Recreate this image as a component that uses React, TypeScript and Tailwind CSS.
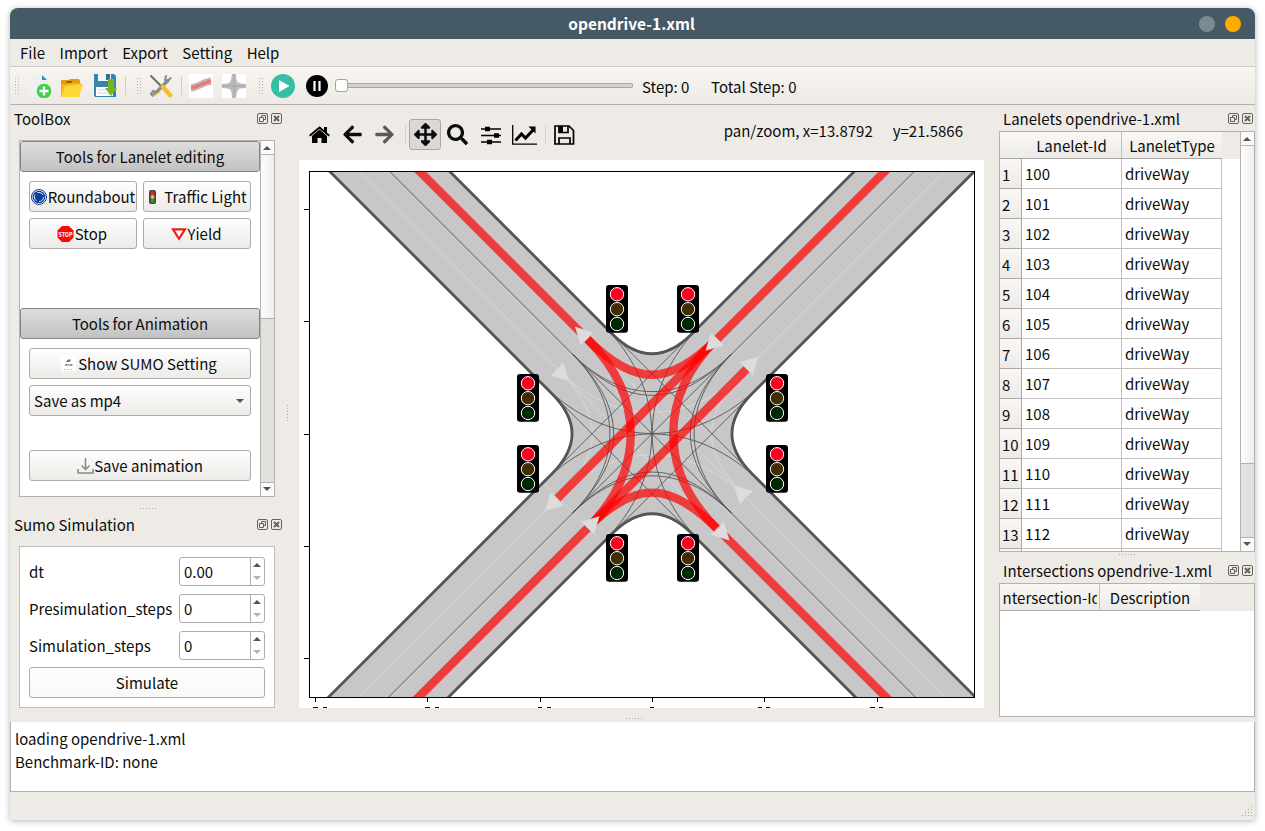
import React from "react";
import { FaArrowLeft, FaArrowRight, FaArrowsAlt, FaSearch } from "react-icons/fa";

const CX = 652;
const CY = 433.7;

type Pt = [number, number];

function turn(a: Pt, v: Pt, b: Pt, k: number): string {
  const c1 = [a[0] + (v[0] - a[0]) * k, a[1] + (v[1] - a[1]) * k];
  const c2 = [b[0] + (v[0] - b[0]) * k, b[1] + (v[1] - b[1]) * k];
  return `M${a[0]} ${a[1]}C${c1[0]} ${c1[1]} ${c2[0]} ${c2[1]} ${b[0]} ${b[1]}`;
}

/* Curve that joins two arms on one side; q is the quarter turn from "top". */
function side(q: number, along: number, shift: number, k: number): string {
  const rot = ([x, y]: Pt): Pt => {
    const r: Pt[] = [[x, y], [-y, x], [-x, -y], [y, -x]];
    return [CX + r[q][0], CY + r[q][1]];
  };
  return turn(
    rot([-along - shift, -along + shift]),
    rot([0, 2 * shift]),
    rot([along + shift, -along + shift]),
    k
  );
}

const B = 79.5;
const arrows: { at: Pt; dir: Pt }[] = [
  { at: [587, 338.8], dir: [-1, -1] },
  { at: [717.5, 338.8], dir: [-1, 1] },
  { at: [746.5, 368.5], dir: [1, -1] },
  { at: [557, 369], dir: [1, 1] },
  { at: [587.5, 528.2], dir: [1, -1] },
  { at: [557, 499], dir: [-1, 1] },
  { at: [717.5, 528.4], dir: [1, 1] },
  { at: [746, 497.5], dir: [-1, -1] },
];
const lights: Pt[] = [
  [606, 285], [677, 285], [517, 374], [766, 374],
  [517, 445], [766, 445], [606, 534], [677, 534],
];

function edge(q: number): string {
  const rot = (x: number, y: number) => {
    const r: Pt[] = [[x, y], [-y, x], [-x, -y], [y, -x]];
    return `${CX + r[q][0]} ${CY + r[q][1]}`;
  };
  return `M${rot(-380, -440)}L${rot(-40, -100)}Q${rot(0, -60)} ${rot(40, -100)}L${rot(380, -440)}`;
}

function RoadPlot() {
  const line = (x1: number, y1: number, x2: number, y2: number) => `M${CX + x1} ${CY + y1}L${CX + x2} ${CY + y2}`;
  return (
    <svg className="block bg-white" width="685" height="548" viewBox="299 160 685 548">
      <defs>
        <clipPath id="axes"><rect x="310" y="171" width="665" height="526" /></clipPath>
      </defs>
      <g clipPath="url(#axes)">
        <path
          fill="#c7c7c7"
          d="M272 -6.3L612 333.7Q652 373.7 692 333.7L1032 -6.3L1112 33.7L752 393.7Q712 433.7 752 473.7L1112 833.7L1032 873.7L692 533.7Q652 493.7 612 533.7L272 873.7L192 833.7L552 473.7Q592 433.7 552 393.7L192 33.7Z"
        />
        <g fill="none" stroke="#d9d9d9" strokeWidth="1">
          <path d={line(-410, -380, -94.5, -64.5)} />
          <path d={line(410, -380, 94.5, -64.5)} />
          <path d={line(-410, 380, -94.5, 64.5)} />
          <path d={line(410, 380, 94.5, 64.5)} />
          <path d={line(-94.5, -64.5, 64.5, 94.5)} />
          <path d={line(94.5, 64.5, -64.5, -94.5)} />
          <path d={side(3, 79.5, -15, 0.72)} />
          <path d={side(1, 79.5, -15, 0.72)} />
          <path d={side(0, 79.5, 15, 0.61)} />
          <path d={side(2, 79.5, 15, 0.61)} />
          <path d={line(-109, 49, -49, 109)} strokeOpacity=".6" />
          <path d={line(109, 49, 49, 109)} strokeOpacity=".6" />
        </g>
        <g fill="none" stroke="#555" strokeWidth="0.9">
          <path d="M262 43.7L1042 823.7M1042 43.7L262 823.7" />
          <path d={line(-49.5, -109.5, 109.5, 49.5)} />
          <path d={line(-109.5, -49.5, 49.5, 109.5)} />
          <path d={line(49.5, -109.5, -109.5, 49.5)} />
          <path d={line(109.5, -49.5, -49.5, 109.5)} />
          {[0, 1, 2, 3].map((q) => (
            <g key={q}>
              <path d={side(q, B, 0, 0.627)} />
              <path d={side(q, B, 0, 0.69)} />
              <path d={side(q, B, 30, 0.6)} />
            </g>
          ))}
        </g>
        <g fill="none" stroke="#555" strokeWidth="2.8">
          {[0, 1, 2, 3].map((q) => <path key={q} d={edge(q)} />)}
        </g>
        <g fill="none" stroke="#ff0000" strokeOpacity="0.7" strokeWidth="8.4">
          <path d="M387 138.7L587 338.7" />
          <path d="M917.5 138.7L717 339.2" />
          <path d="M387 728.7L587.5 528.2" />
          <path d="M917.5 728.7L717 528.2" />
          <path d={side(0, B, -15, 0.735)} />
          <path d={side(2, B, -15, 0.735)} />
          <path d={side(3, B, 15, 0.61)} />
          <path d={side(1, B, 15, 0.61)} />
          <path d="M716.5 339.2L557.5 498.2" />
          <path d="M587.5 528.2L746.5 369.2" />
        </g>
        {arrows.map(({ at, dir }, i) => (
          <path
            key={i}
            fill="#dcdcdc"
            d={`M${at[0] + dir[0] * 12} ${at[1] + dir[1] * 12}L${at[0] - dir[1] * 6.4} ${at[1] + dir[0] * 6.4}L${at[0] + dir[1] * 6.4} ${at[1] - dir[0] * 6.4}Z`}
          />
        ))}
        {lights.map(([x, y], i) => (
          <g key={i} stroke="#fff" strokeWidth="1">
            <rect x={x} y={y} width="22" height="47.7" rx="3" fill="#000" stroke="none" />
            <circle cx={x + 11} cy={y + 9.3} r="6.7" fill="#ff0022" />
            <circle cx={x + 11} cy={y + 24.2} r="6.7" fill="#402d00" />
            <circle cx={x + 11} cy={y + 39} r="6.7" fill="#002800" />
          </g>
        ))}
      </g>
      <rect x="309.5" y="171.5" width="665" height="526" fill="none" stroke="#000" />
      <path
        stroke="#000"
        d="M304 209.5h5M304 321.5h5M304 434.5h5M304 546.5h5M304 658.5h5M315.5 698v4M427.5 698v4M540.5 698v4M652.5 698v4M764.5 698v4M877.5 698v4"
      />
      <path
        stroke="#000"
        d="M313 707.5h5M323 707.5h4M425 707.5h5M435 707.5h4M538 707.5h4M547 707.5h4M650 707.5h4M758 707.5h4M766 707.5h4M870 707.5h5M879 707.5h4"
      />
    </svg>
  );
}

function DockTitle({ children, className }: { children: React.ReactNode; className: string }) {
  return (
    <div className={`flex items-center justify-between ${className}`}>
      <span className="whitespace-nowrap pt-px">{children}</span>
      <div className="flex gap-[3px]">
        <svg width="11" height="11" fill="none" stroke="#66635f">
          <rect x=".5" y=".5" width="10" height="10" rx="1.5" />
          <path d="M4.5 4V2.5h4v4H7M2.5 4.5h4v4h-4z" />
        </svg>
        <svg width="11" height="11" fill="none" stroke="#66635f">
          <rect x=".5" y=".5" width="10" height="10" rx="1.5" />
          <path d="M3 3l5 5M8 3L3 8" strokeWidth="2" />
        </svg>
      </div>
    </div>
  );
}

function Tri({ down, color = "#555" }: { down?: boolean; color?: string }) {
  return (
    <svg width="8" height="4" fill={color} className="block shrink-0">
      <path d={down ? "M0 0h8L4 4z" : "M0 4h8L4 0z"} />
    </svg>
  );
}

function ScrollBar({ thumb }: { thumb: string }) {
  return (
    <div className="flex w-[14px] shrink-0 flex-col border-l border-[#b4b1ae] bg-[#e1e1de]">
      <div className="flex h-[14px] items-center justify-center border-b border-[#b4b1ae] bg-[#fbfbfa] pr-px"><Tri /></div>
      <div className={`border-b border-[#b4b1ae] bg-gradient-to-r from-[#fdfdfd] to-[#efeeec] ${thumb}`} />
      <div className="grow" />
      <div className="flex h-[14px] items-center justify-center border-t border-[#b4b1ae] bg-[#fbfbfa] pb-px pr-px"><Tri down /></div>
    </div>
  );
}

function Button({ children, className = "" }: { children: React.ReactNode; className?: string }) {
  return (
    <div className={`flex h-[31px] items-center justify-center whitespace-nowrap rounded-[3px] border border-[#aeaba8] bg-gradient-to-b from-[#fefefe] to-[#edebe8] ${className}`}>
      {children}
    </div>
  );
}

function ToolHeader({ children }: { children: React.ReactNode }) {
  return (
    <div className="flex h-[31px] items-center justify-center rounded-[3px] border border-[#868686] bg-gradient-to-b from-[#dedede] to-[#c2c2c2]">
      {children}
    </div>
  );
}

function Grip() {
  return (
    <svg width="5" height="16" fill="#b9b6b2">
      {[0, 3, 6, 9, 12, 15].map((y) => (
        <g key={y}><rect x="0" y={y} width="1" height="1" /><rect x="3" y={y} width="1" height="1" /></g>
      ))}
    </svg>
  );
}

function Dots({ vertical }: { vertical?: boolean }) {
  return (
    <svg width={vertical ? 1 : 16} height={vertical ? 16 : 1} fill="#b0ada9" className="block">
      {[0, 3, 6, 9, 12, 15].map((p) => <rect key={p} x={vertical ? 0 : p} y={vertical ? p : 0} width="1" height="1" />)}
    </svg>
  );
}

function SpinRow({ label, value }: { label: string; value: string }) {
  return (
    <div className="flex h-[29px] items-center justify-between">
      <span>{label}</span>
      <div className="flex h-[29px] w-[86px] rounded-[3px] border border-[#b0adaa] bg-white">
        <span className="flex w-[71px] items-center border-r border-[#b0adaa] pl-1">{value}</span>
        <div className="flex grow flex-col items-center justify-between pb-[5px] pr-px pt-[5px]">
          <Tri /><Tri down color="#b5b2af" />
        </div>
      </div>
    </div>
  );
}

function MainToolbar() {
  return (
    <div className="flex h-[38px] items-center border-b border-[#b4b1ae] bg-gradient-to-b from-[#f8f5f1] to-[#edeae5] pl-[5px]">
      <Grip />
      <svg className="ml-2" width="24" height="24">
        <path d="M2 1h12l6 6v16H2z" fill="#eef1f2" /><path d="M14 1l5 5h-5z" fill="#2a93b8" />
        <circle cx="16" cy="17" r="7.3" fill="#43cf46" /><path d="M16 12.5v9M11.5 17h9" stroke="#fff" strokeWidth="2.4" />
      </svg>
      <svg className="ml-2" width="24" height="24">
        <path d="M1 6h8l1-1h9l1 2v5H1z" fill="#e39b0a" /><path d="M7 7h5v2H6z" fill="#8d5b0c" />
        <path d="M1 22V10h6l2-1h12v3l-3 11H2z" fill="#f0b416" /><path d="M5 12l8-1 10-1-4 13H1z" fill="#fdd835" />
      </svg>
      <svg className="ml-[10px]" width="24" height="24">
        <path d="M0 0h20l2 2v21H1l-1-2z" fill="#3585ac" /><path d="M4 0h13v7H4z" fill="#f2f5f8" /><path d="M12 0h4v6h-4z" fill="#31718f" />
        <path d="M2 13h17v9H2z" fill="#fff" /><path d="M4 16h11M4 19h11" stroke="#cbd3de" />
        <path d="M14 5h6v9h3l-6 8-6-8h3z" fill="#78b51c" />
      </svg>
      <div className="ml-[7px] h-[19px] w-px bg-[#cfccc7]" />
      <div className="ml-[11px] flex"><Grip /></div>
      <svg className="ml-[7px]" width="24" height="24" fill="none" strokeLinecap="round">
        <path d="M2 2l12 12" stroke="#666" strokeWidth="1.8" /><path d="M5.500 20L19 6.500" stroke="#858b93" strokeWidth="3.2" />
        <path d="M14 13l7 8" stroke="#f7bd25" strokeWidth="4.5" />
        <path d="M21.5 4l-2.500 3-3-1 1-4M7 18l-3-1-2 3 2 2" stroke="#858b93" strokeWidth="2" />
        <path d="M10.5 18l-6 4" stroke="#f7bd25" strokeWidth="1.5" />
      </svg>
      <div className="ml-2 h-[19px] w-px bg-[#cfccc7]" />
      <svg className="ml-[7px] bg-white" width="24" height="24" fill="none">
        <path d="M2 14c8-1 10-5 20-7" stroke="#d2cfcf" strokeWidth="7" /><path d="M2 14c8-1 10-5 20-7" stroke="#e87878" strokeWidth="3.5" />
        <path d="M2 11c8-1 10-5 20-7M2 17c8-1 10-5 20-7" stroke="#999595" strokeWidth=".6" />
      </svg>
      <svg className="ml-[9px] bg-white" width="24" height="24">
        <path d="M10 0h4q0 8 3 9t7 1v4q-5 0-7 1t-3 9h-4q0-8-3-9t-7-1v-4q5 0 7-1t3-9z" fill="#bdbdbd" />
        <path d="M12 0v24M0 12h24" stroke="#a5a5a5" />
      </svg>
      <div className="ml-[13px] flex"><Grip /></div>
      <svg className="ml-[7px]" width="24" height="24"><circle cx="12" cy="12" r="12" fill="#35bfa6" /><path d="M8 6l10.5 6L8 18z" fill="#fff" /></svg>
      <svg className="ml-[11px]" width="22" height="22"><circle cx="11" cy="11" r="11" /><path d="M8.5 6v10M13.5 6v10" stroke="#fff" strokeWidth="2.2" /></svg>
      <div className="ml-[7px] flex items-center">
        <div className="h-[13px] w-[13px] rounded-[3px] border border-[#a5a2a0] bg-white" />
        <div className="h-[5px] w-[285px] rounded-r-[2px] border border-l-0 border-[#aaa7a4] bg-[#d6d3cf]" />
      </div>
      <span className="ml-[9px] w-[69px] pt-[3px]">Step: 0</span>
      <span className="pt-[3px]">Total Step: 0</span>
    </div>
  );
}

function PlotToolbar() {
  return (
    <div className="flex h-[55px] items-center pl-[10px] pt-[4px]">
      <svg width="21" height="18"><path d="M10.5 3.500L3 10v7h5.500v-5h4v5H18v-7z" /><path d="M.7 9.700l9.800-8.200 9.800 8.200" fill="none" stroke="#000" strokeWidth="1.9" /><path d="M15 1h3v6l-3-2.500z" /></svg>
      <FaArrowLeft className="ml-[12px]" size={21} />
      <FaArrowRight className="ml-[11px]" size={21} color="#5c5a57" />
      <div className="ml-[10px] h-[19px] w-px bg-[#d8d5d0]" />
      <div className="ml-[3px] flex h-[31px] w-[32px] items-center justify-center rounded-[3px] border border-[#a9a6a3] bg-[#dbd8d5]"><FaArrowsAlt size={23} /></div>
      <FaSearch className="ml-[6px]" size={21} />
      <svg className="ml-[13px]" width="20" height="20" stroke="#000" strokeWidth="1.4"><path d="M0 4h20M0 10.5h20M0 17h20" /><path d="M4 4h5M13 10.5h5M6 17h5" strokeWidth="4.5" /></svg>
      <svg className="ml-[11px]" width="25" height="20" fill="none" stroke="#000"><path d="M.7 0v19.200H25" strokeWidth="1.3" /><path d="M3.5 15.500l6-6.500 4 4 8-8.500" strokeWidth="3" /><path d="M16.5 1.500h7v7z" fill="#000" stroke="none" /></svg>
      <div className="ml-[8px] h-[19px] w-px bg-[#d8d5d0]" />
      <svg className="ml-[8px]" width="21" height="20" fill="none" stroke="#000" strokeWidth="1.7"><path d="M1 1h14l4.500 4.500V19H1z" /><path d="M5 19v-6h11v6" /><path d="M5 1v6.500h9V1" /><path d="M5 1h4v6H5z" fill="#000" stroke="none" /></svg>
      <span className="mb-[8px] ml-auto mr-[21px] flex gap-5 whitespace-nowrap"><span>pan/zoom, x=13.8792</span><span>y=21.5866</span></span>
    </div>
  );
}

const headCell = "flex items-center justify-center overflow-hidden whitespace-nowrap border-b border-r border-[#c2bfbc] border-b-[#aaa7a4] bg-gradient-to-b from-[#faf7f4] to-[#edebe8] pt-[2px]";

export default function App() {
  return (
    <div className="h-[831px] w-[1265px] overflow-hidden bg-white pl-[10px] pt-2 font-['Noto_Sans_CJK_SC',sans-serif] text-[15px] leading-5 text-[#0c0c0c]">
      <div className="flex h-[812px] w-[1245px] flex-col overflow-hidden rounded-b-[2px] rounded-t-[8px] bg-[#eeebe6] shadow-[0_1px_6px_rgba(0,0,0,0.3)]">
        <div className="flex h-[31px] shrink-0 items-center justify-end gap-2 bg-[#465a65] pr-[14px]">
          <span className="ml-[14px] grow pb-[2px] pl-[48px] text-center text-[15.5px] font-bold text-white">opendrive-1.xml</span>
          <div className="h-4 w-4 rounded-full bg-[#7b8b92]" />
          <div className="ml-[2px] h-4 w-4 rounded-full bg-[#ffab00]" />
        </div>
        <div className="flex h-7 shrink-0 items-center gap-[14.5px] border-b border-[#d0cdc9] pl-[10px]">
          <span>File</span><span>Import</span><span>Export</span><span>Setting</span><span>Help</span>
        </div>
        <MainToolbar />

        <div className="flex h-[617px] shrink-0">
          <div className="flex w-[289px]">
            <div className="w-[275px] shrink-0">
              <DockTitle className="h-[27px] pl-1 pr-[3px]">ToolBox</DockTitle>
              <div className="ml-[9px] mt-[8px] flex h-[357px] w-[256px] border border-[#b4b1ae] bg-white">
                <div className="w-[240px] shrink-0">
                  <ToolHeader>Tools for Lanelet editing</ToolHeader>
                  <div className="grid h-[136px] grid-cols-2 content-start gap-[6px] px-[9px] pt-[9px]">
                    <Button>
                      <svg className="mr-px shrink-0" width="16" height="16"><circle cx="8" cy="8" r="7.5" fill="#fff" stroke="#0d3b92" /><circle cx="8" cy="8" r="6.3" fill="#0b3d9c" /><circle cx="8" cy="8" r="4.6" fill="none" stroke="#dfe8fb" strokeWidth="1" strokeDasharray="7 2.630" /></svg>
                      Roundabout
                    </Button>
                    <Button className="pr-[2px]">
                      <svg className="mr-[5px] shrink-0" width="14" height="16"><rect x="4" y="1" width="7" height="14" rx="2" fill="#444" /><circle cx="7.5" cy="4" r="2" fill="#e52620" /><circle cx="7.5" cy="8" r="2" fill="#f5b81e" /><circle cx="7.5" cy="12" r="2" fill="#18a348" /></svg>
                      Traffic Light
                    </Button>
                    <Button className="pr-[2px]">
                      <svg className="mr-[1px] overflow-visible" width="17" height="16"><path d="M5 0h7l4.500 4.500v7L12 16H5L.5 11.500v-7z" fill="#fb0707" /><text x="8.5" y="10.5" textAnchor="middle" fill="#fff" fontSize="6.5" fontWeight="bold" textLength="14" lengthAdjust="spacingAndGlyphs" className="leading-none">STOP</text></svg>
                      Stop
                    </Button>
                    <Button className="pr-[2px]">
                      <svg className="mr-[1px]" width="16" height="16"><path d="M2 3.300h12L8 12.800z" fill="#fff" stroke="#ee1c1c" strokeWidth="2.2" /></svg>
                      Yield
                    </Button>
                  </div>
                  <ToolHeader>Tools for Animation</ToolHeader>
                  <div className="px-[9px] pt-[9px]">
                    <Button className="pr-[2px]">
                      <svg className="mr-[1px]" width="16" height="16"><rect width="15" height="15" fill="#fff" /><path d="M5 5.500l2-2h3L9 6H5z" fill="#4c9a50" /><path d="M4 9h8" stroke="#999" strokeWidth="2" strokeDasharray="2 .5" /><path d="M3 13.500h9" stroke="#a5d3ee" strokeDasharray="2 1" /></svg>
                      Show SUMO Setting
                    </Button>
                    <Button className="mt-[6px] !justify-between pl-1 pr-[6px]">Save as mp4<Tri down /></Button>
                    <Button className="mt-[34px]">
                      <svg width="17" height="16" fill="none" stroke="#8b8987" strokeWidth="1.5"><path d="M1 11v4h15v-4M8.5 0v11M4.5 7.500l4 4 4-4" /></svg>
                      Save animation
                    </Button>
                  </div>
                </div>
                <ScrollBar thumb="h-[164px]" />
              </div>
              <div className="flex h-[13px] items-end pb-px pl-[130px]"><Dots /></div>
              <DockTitle className="h-[28px] pl-1 pr-[3px]">Sumo Simulation</DockTitle>
              <div className="ml-[9px] mt-[8px] flex h-[162px] w-[256px] flex-col gap-2 border border-[#c0bdba] bg-white px-[9px] pt-[10px]">
                <SpinRow label="dt" value="0.00" />
                <SpinRow label="Presimulation_steps" value="0" />
                <SpinRow label="Simulation_steps" value="0" />
                <Button className="-mt-px !to-[#f8f8f7]">Simulate</Button>
              </div>
            </div>
            <div className="pl-[2px] pt-[300px]"><Dots vertical /></div>
          </div>

          <div className="w-[685px] shrink-0">
            <PlotToolbar />
            <RoadPlot />
            <div className="flex h-[14px] items-end pb-[3px] pl-[327px]"><Dots /></div>
          </div>

          <div className="ml-[15px] w-[256px]">
            <DockTitle className="h-[26px] pl-1 pr-[2px] pt-px">Lanelets opendrive-1.xml</DockTitle>
            <div className="flex h-[421px] border border-[#b4b1ae] bg-white">
              <div className="h-full w-[240px] shrink-0 overflow-hidden">
                <div className="flex h-[27px] bg-[#eeebe6]">
                  <div className={`w-[122px] pl-[22px] ${headCell}`}>Lanelet-Id</div>
                  <div className={`w-[100px] border-r-0 ${headCell}`}>LaneletType</div>
                </div>
                {Array.from({ length: 14 }, (_, i) => (
                  <div key={i} className="flex h-[30px] w-[222px]">
                    <div className="w-[22px] shrink-0 border-b border-r border-[#aaa7a4] bg-gradient-to-b from-[#faf7f4] to-[#edebe8] pl-[2px] pt-[6px]">{i < 13 ? i + 1 : ""}</div>
                    <div className="w-[100px] border-b border-r border-[#c2bfbc] pl-[3px] pt-[5px]">{i < 13 ? 100 + i : ""}</div>
                    <div className="w-[100px] border-b border-r border-[#c2bfbc] pl-[3px] pt-[5px]">{i < 13 ? "driveWay" : ""}</div>
                  </div>
                ))}
              </div>
              <ScrollBar thumb="h-[318px]" />
            </div>
            <div className="flex h-[3px] items-end pl-[120px]"><Dots /></div>
            <DockTitle className="h-[28px] pl-1 pr-[2px] pt-[2px]">Intersections opendrive-1.xml</DockTitle>
            <div className="h-[134px] border border-[#b4b1ae] bg-white">
              <div className="flex h-[27px] bg-[#eeebe6]">
                <div className={`w-[100px] ${headCell}`}><div className="flex w-[94px] justify-center overflow-hidden">Intersection-Id</div></div>
                <div className={`w-[100px] border-r-0 ${headCell}`}>Description</div>
              </div>
            </div>
          </div>
        </div>

        <div className="h-[70px] shrink-0 border border-t-0 border-[#b4b1ae] bg-white pl-1 pt-[5px] leading-[23px]">
          <div>loading opendrive-1.xml</div>
          <div>Benchmark-ID: none</div>
        </div>
        <div className="flex h-[28px] shrink-0 items-end justify-end pb-[3px] pr-[2px]">
          <svg width="11" height="11" fill="#b0ada9">
            {[[9, 0], [6, 3], [9, 3], [3, 6], [6, 6], [9, 6], [0, 9], [3, 9], [6, 9], [9, 9]].map(([x, y]) => (
              <rect key={`${x}-${y}`} x={x} y={y} width="1" height="1" />
            ))}
          </svg>
        </div>
      </div>
    </div>
  );
}
